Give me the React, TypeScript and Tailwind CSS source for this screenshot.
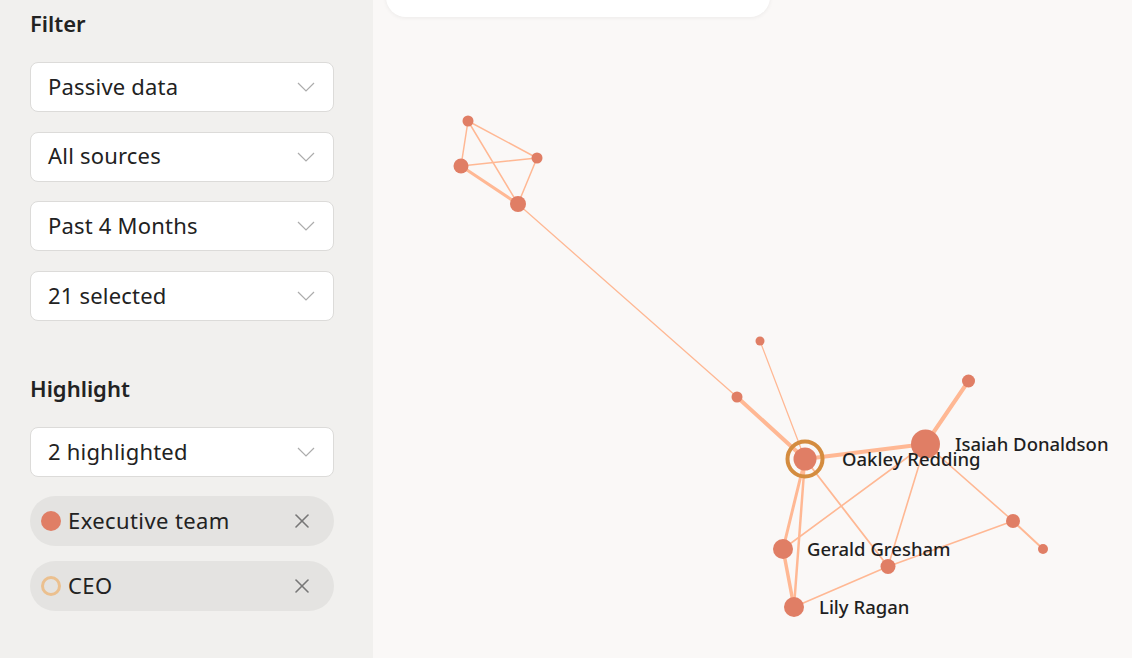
import { X } from "lucide-react";

type Node = { id: string; x: number; y: number; r: number };
type Edge = { a: string; b: string; w: number };

const nodes: Node[] = [
  { id: "a", x: 468, y: 121, r: 5.5 },
  { id: "b", x: 461, y: 166, r: 7.5 },
  { id: "c", x: 537, y: 158, r: 5.5 },
  { id: "d", x: 518, y: 204, r: 8 },
  { id: "e", x: 760, y: 341, r: 4.5 },
  { id: "f", x: 737, y: 397, r: 5.5 },
  { id: "oakley", x: 805, y: 459, r: 11.5 },
  { id: "isaiah", x: 925.5, y: 444, r: 14.5 },
  { id: "g", x: 968.5, y: 381, r: 6.5 },
  { id: "h", x: 1013, y: 521, r: 7 },
  { id: "i", x: 1043, y: 549, r: 5 },
  { id: "gerald", x: 783, y: 549, r: 10 },
  { id: "j", x: 888, y: 566.5, r: 7.5 },
  { id: "lily", x: 794, y: 607, r: 10 },
];

const edges: Edge[] = [
  { a: "a", b: "b", w: 1.5 },
  { a: "a", b: "c", w: 1.5 },
  { a: "a", b: "d", w: 1.5 },
  { a: "b", b: "c", w: 1.5 },
  { a: "b", b: "d", w: 3 },
  { a: "c", b: "d", w: 1.5 },
  { a: "d", b: "f", w: 1.3 },
  { a: "f", b: "oakley", w: 4 },
  { a: "e", b: "oakley", w: 1.3 },
  { a: "oakley", b: "isaiah", w: 4 },
  { a: "isaiah", b: "g", w: 4 },
  { a: "oakley", b: "gerald", w: 3 },
  { a: "oakley", b: "lily", w: 2.5 },
  { a: "oakley", b: "j", w: 1.8 },
  { a: "isaiah", b: "gerald", w: 1.6 },
  { a: "isaiah", b: "j", w: 1.6 },
  { a: "isaiah", b: "h", w: 1.6 },
  { a: "h", b: "i", w: 2 },
  { a: "h", b: "j", w: 1.6 },
  { a: "j", b: "lily", w: 1.6 },
  { a: "gerald", b: "lily", w: 3.5 },
];

const labels = [
  { text: "Oakley Redding", x: 842, y: 466 },
  { text: "Isaiah Donaldson", x: 955, y: 451 },
  { text: "Gerald Gresham", x: 807, y: 556 },
  { text: "Lily Ragan", x: 819, y: 614 },
];

const byId = Object.fromEntries(nodes.map((n) => [n.id, n]));

function Chevron() {
  return (
    <svg width="18" height="10" viewBox="0 0 18 10" fill="none">
      <polyline points="1,1 9,9 17,1" stroke="#acacac" strokeWidth="1.2" />
    </svg>
  );
}

function Select({ label }: { label: string }) {
  return (
    <div className="flex h-[50px] items-center justify-between rounded-lg border border-[#dcdbd9] bg-white pl-[17px] pr-[18px]">
      <span className="pb-[2px] text-[22px] tracking-[0.2px] text-[#222]">{label}</span>
      <Chevron />
    </div>
  );
}

function Chip({ label, ring }: { label: string; ring?: boolean }) {
  return (
    <div className="flex h-[50px] items-center justify-between rounded-full bg-[#e4e3e1] pl-[11px] pr-[20px]">
      <div className="flex items-center gap-[7px]">
        {ring ? (
          <span className="h-[20px] w-[20px] rounded-full border-[3px] border-[#ebc08f]" />
        ) : (
          <span className="h-[20px] w-[20px] rounded-full bg-[#e07e65]" />
        )}
        <span className="pb-[2px] text-[22px] tracking-[0.4px] text-[#222]">{label}</span>
      </div>
      <X className="h-[24px] w-[24px] text-[#777]" strokeWidth={1.6} />
    </div>
  );
}

function Graph() {
  return (
    <svg className="h-full w-full" viewBox="373 0 759 658">
      {edges.map((e, i) => {
        const a = byId[e.a];
        const b = byId[e.b];
        return (
          <line
            key={i}
            x1={a.x}
            y1={a.y}
            x2={b.x}
            y2={b.y}
            stroke="#ffb894"
            strokeWidth={e.w}
            strokeLinecap="round"
          />
        );
      })}
      <circle cx={805} cy={459} r={17.5} fill="none" stroke="#d48c3f" strokeWidth={4} />
      {nodes.map((n) => (
        <circle key={n.id} cx={n.x} cy={n.y} r={n.r} fill="#e07e65" />
      ))}
      {labels.map((l) => (
        <text
          key={l.text}
          x={l.x}
          y={l.y}
          fontSize={18.5}
          fontWeight={500}
          fill="#1f1f1f"
          fontFamily="'Noto Sans', sans-serif"
        >
          {l.text}
        </text>
      ))}
    </svg>
  );
}

export default function App() {
  return (
    <div className="flex h-[658px] w-full overflow-hidden font-['Noto_Sans',sans-serif]">
      <aside className="flex w-[373px] shrink-0 flex-col bg-[#f1f0ee] pl-[30px] pr-[39px] pt-[9px]">
        <h2 className="h-[28px] text-[22px] font-semibold leading-[28px] text-[#222]">Filter</h2>
        <div className="mt-[25px] flex flex-col gap-[19.7px]">
          <Select label="Passive data" />
          <Select label="All sources" />
          <Select label="Past 4 Months" />
          <Select label="21 selected" />
        </div>
        <h2 className="mt-[53px] h-[28px] text-[22px] font-semibold leading-[28px] text-[#222]">Highlight</h2>
        <div className="mt-[25px]">
          <Select label="2 highlighted" />
        </div>
        <div className="mt-[19px] flex flex-col gap-[15px]">
          <Chip label="Executive team" />
          <Chip label="CEO" ring />
        </div>
      </aside>
      <main className="relative flex-1 bg-[#faf8f7]">
        <div className="absolute left-[13px] top-[-40px] h-[57px] w-[384px] rounded-[20px] bg-white shadow-[0_1px_4px_rgba(0,0,0,0.06)]" />
        <Graph />
      </main>
    </div>
  );
}
